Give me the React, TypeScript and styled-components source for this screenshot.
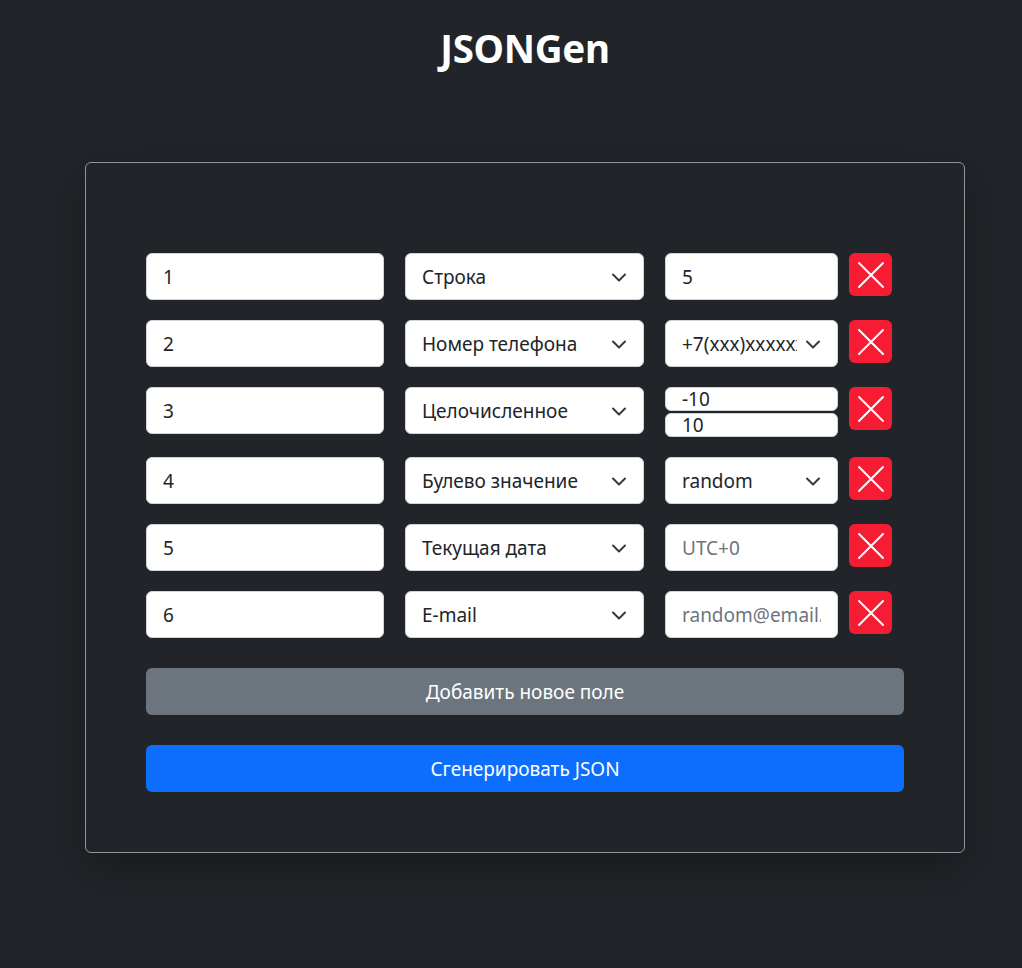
import React from "react";
import styled, { createGlobalStyle } from "styled-components";

const Global = createGlobalStyle`
  html, body { margin: 0; padding: 0; background: #212529; }
  body { font-family: "Noto Sans", "Open Sans", sans-serif; color: #dee2e6; }
  * { box-sizing: border-box; }
`;

const Page = styled.div`
  width: 1022px;
  min-height: 968px;
  padding-left: 85px;
`;

const Column = styled.div`
  width: 880px;
`;

const Title = styled.h1`
  margin: 0;
  padding-top: 25px;
  height: 162px;
  text-align: center;
  font-size: 38.5px;
  font-weight: 700;
  color: #ffffff;
  line-height: 1.2;
  letter-spacing: -0.3px;
`;

const Card = styled.div`
  border: 1px solid #8f959b;
  border-radius: 6px;
  padding: 90px 60px 60px 60px;
  box-shadow: 0 1rem 3rem rgba(0, 0, 0, 0.3);
  display: flex;
  flex-direction: column;
`;

const Rows = styled.div`
  display: flex;
  flex-direction: column;
  gap: 20px;
`;

const Row = styled.div`
  display: flex;
  align-items: flex-start;
`;

const Input = styled.input<{ $w: number; $gap?: number }>`
  width: ${(p) => p.$w}px;
  margin-right: ${(p) => p.$gap ?? 21}px;
  height: 47px;
  border: 1px solid #ced4da;
  border-radius: 6px;
  background: #fff;
  padding: 1px 16px 0;
  font-family: inherit;
  font-size: 19px;
  color: #212529;
  outline: none;
  &::placeholder { color: #6c757d; }
`;

const SelectBox = styled.div<{ $w: number; $gap?: number }>`
  position: relative;
  width: ${(p) => p.$w}px;
  margin-right: ${(p) => p.$gap ?? 21}px;
  height: 47px;
  border: 1px solid #ced4da;
  border-radius: 6px;
  background: #fff;
  padding: 1px 40px 0 16px;
  font-size: 19px;
  color: #212529;
  display: flex;
  align-items: center;
`;

const SelectText = styled.span`
  white-space: nowrap;
  overflow: hidden;
`;

const Chevron = styled.svg`
  position: absolute;
  right: 16px;
  top: 50%;
  margin-top: -6px;
  width: 16px;
  height: 12px;
`;

const RangeStack = styled.div`
  width: 173px;
  margin-right: 11px;
  display: flex;
  flex-direction: column;
  gap: 2px;
`;

const SmallInput = styled.input`
  width: 100%;
  height: 24px;
  border: 1px solid #ced4da;
  border-radius: 6px;
  background: #fff;
  padding: 0 16px;
  font-family: inherit;
  font-size: 19px;
  line-height: 22px;
  color: #212529;
  outline: none;
`;

const DeleteButton = styled.button`
  width: 43px;
  height: 43px;
  border: none;
  border-radius: 6px;
  background: #f61c33;
  padding: 0;
  display: flex;
  align-items: center;
  justify-content: center;
  cursor: pointer;
`;

const WideButton = styled.button<{ $variant: "gray" | "blue"; $mt: number }>`
  margin-top: ${(p) => p.$mt}px;
  width: 758px;
  height: 47px;
  border: none;
  border-radius: 6px;
  background: ${(p) => (p.$variant === "gray" ? "#6c757d" : "#0d6efd")};
  color: #fff;
  font-family: inherit;
  font-size: 19px;
  padding-top: 1px;
  cursor: pointer;
`;

const ChevronIcon = () => (
  <Chevron viewBox="0 0 16 12">
    <path d="M2 3.5l6 6 6-6" fill="none" stroke="#343a40" strokeWidth="2" strokeLinecap="round" strokeLinejoin="round" />
  </Chevron>
);

const Select = ({ w, gap, children }: { w: number; gap?: number; children: React.ReactNode }) => (
  <SelectBox $w={w} $gap={gap}>
    <SelectText>{children}</SelectText>
    <ChevronIcon />
  </SelectBox>
);

const Delete = () => (
  <DeleteButton aria-label="delete">
    <svg width="28" height="28" viewBox="0 0 28 28">
      <path d="M2 2L26 26M26 2L2 26" stroke="#fff" strokeWidth="2" strokeLinecap="round" />
    </svg>
  </DeleteButton>
);

export default function App() {
  return (
    <>
      <Global />
      <Page>
        <Column>
          <Title>JSONGen</Title>
          <Card>
            <Rows>
              <Row>
                <Input $w={238} defaultValue="1" />
                <Select w={239}>Строка</Select>
                <Input $w={173} $gap={11} defaultValue="5" />
                <Delete />
              </Row>
              <Row>
                <Input $w={238} defaultValue="2" />
                <Select w={239}>Номер телефона</Select>
                <Select w={173} gap={11}>+7(xxx)xxxxxxx</Select>
                <Delete />
              </Row>
              <Row>
                <Input $w={238} defaultValue="3" />
                <Select w={239}>Целочисленное</Select>
                <RangeStack>
                  <SmallInput defaultValue="-10" />
                  <SmallInput defaultValue="10" />
                </RangeStack>
                <Delete />
              </Row>
              <Row>
                <Input $w={238} defaultValue="4" />
                <Select w={239}>Булево значение</Select>
                <Select w={173} gap={11}>random</Select>
                <Delete />
              </Row>
              <Row>
                <Input $w={238} defaultValue="5" />
                <Select w={239}>Текущая дата</Select>
                <Input $w={173} $gap={11} placeholder="UTC+0" />
                <Delete />
              </Row>
              <Row>
                <Input $w={238} defaultValue="6" />
                <Select w={239}>E-mail</Select>
                <Input $w={173} $gap={11} placeholder="random@email.com" />
                <Delete />
              </Row>
            </Rows>
            <WideButton $variant="gray" $mt={30}>Добавить новое поле</WideButton>
            <WideButton $variant="blue" $mt={30}>Сгенерировать JSON</WideButton>
          </Card>
        </Column>
      </Page>
    </>
  );
}
